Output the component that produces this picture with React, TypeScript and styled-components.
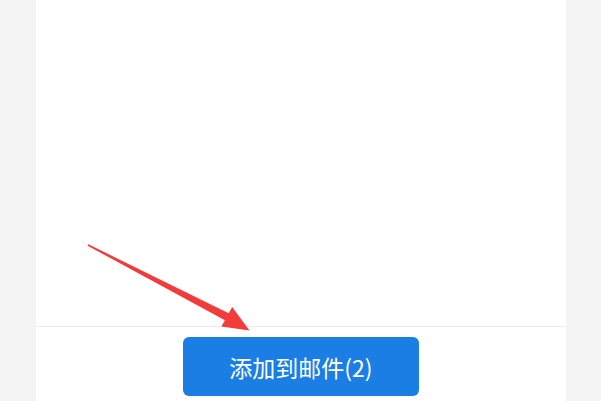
import styled, { createGlobalStyle } from 'styled-components'

const GlobalStyle = createGlobalStyle`
  html,
  body {
    margin: 0;
    padding: 0;
    background: #f4f4f4;
  }
  body {
    font-family: 'Noto Sans CJK SC', 'Noto Sans', sans-serif;
  }
`

export default function App() {
  return (
    <>
      <GlobalStyle />
      <Page>
        <Panel>
          <Content />
          <Footer>
            <AddButton type="button">添加到邮件(2)</AddButton>
          </Footer>
        </Panel>
        {/* red pointer drawn on top */}
        <Pointer width="601" height="401" viewBox="0 0 601 401">
          <polygon
            fill="#f23c3c"
            points="87.6,245.7 224.9,320.3 221.4,326.6 249.5,330.5 232.2,307.0 228.7,313.3 88.4,244.3"
          />
        </Pointer>
      </Page>
    </>
  )
}

const Page = styled.div`
  position: relative;
  width: 601px;
  height: 401px;
  overflow: hidden;
  display: flex;
  justify-content: center;
  background: #f4f4f4;
`

const Panel = styled.div`
  width: 530px;
  margin-left: 1px;
  height: 401px;
  background: #ffffff;
  display: flex;
  flex-direction: column;
`

const Content = styled.div`
  height: 326px;
`

const Footer = styled.div`
  border-top: 1px solid #ececec;
  flex: 1;
  display: flex;
  justify-content: center;
  padding-top: 10px;
`

const AddButton = styled.button`
  width: 236px;
  height: 59px;
  border: none;
  border-radius: 6px;
  background: #1b7ee4;
  color: #ffffff;
  font-family: 'Noto Sans CJK SC', 'Noto Sans', sans-serif;
  font-size: 23px;
  padding: 0;
  display: flex;
  align-items: center;
  justify-content: center;
  cursor: pointer;
`

const Pointer = styled.svg`
  position: absolute;
  left: 0;
  top: 0;
  pointer-events: none;
`
